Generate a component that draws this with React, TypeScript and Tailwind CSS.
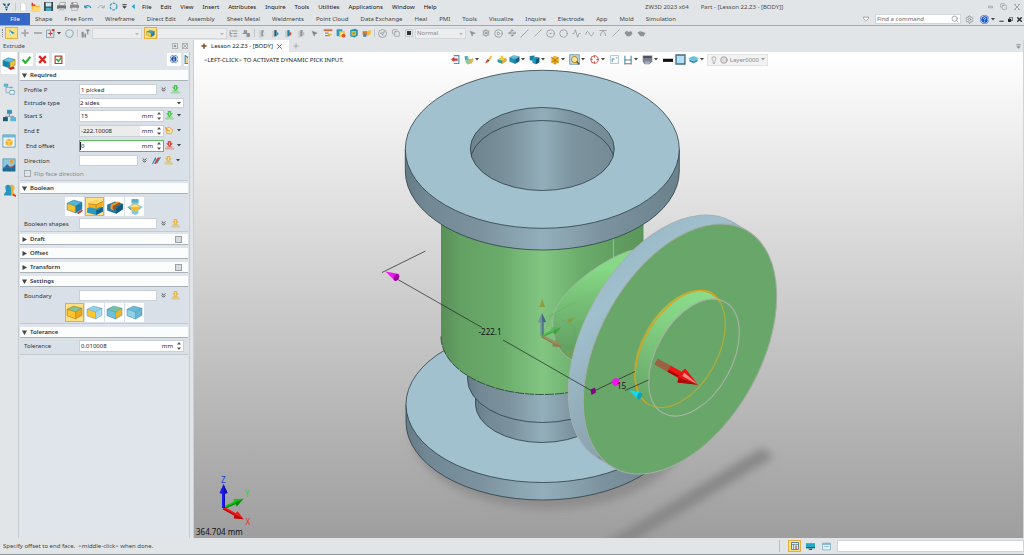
import type { ReactNode } from "react";
import {
  Activity,
  ChevronsDown,
  Circle,
  CircleDot,
  CircleHelp,
  CirclePlay,
  Copy,
  Crosshair,
  Info,
  Lightbulb,
  ListTree,
  MousePointer2,
  Navigation,
  Search,
  Settings,
  Slash,
  Waypoints,
} from "lucide-react";

const MENUS = ["File", "Edit", "View", "Insert", "Attributes", "Inquire", "Tools", "Utilities", "Applications", "Window", "Help"];

const TABS = [
  "Shape", "Free Form", "Wireframe", "Direct Edit", "Assembly", "Sheet Metal", "Weldments", "Point Cloud",
  "Data Exchange", "Heal", "PMI", "Tools", "Visualize", "Inquire", "Electrode", "App", "Mold", "Simulation",
];

/* ---------- small drawings ---------- */

function Svg({ size = 11, children }: { size?: number; children: ReactNode }) {
  return (
    <svg width={size} height={size} viewBox="0 0 16 16" fill="none" className="shrink-0" aria-hidden="true">
      {children}
    </svg>
  );
}

interface CubeProps {
  top?: string;
  left?: string;
  right?: string;
  size?: number;
  edge?: string;
  children?: ReactNode;
}

function Cube({ top = "#5cc3e0", left = "#1f8fb8", right = "#0f5f86", size = 11, edge = "#2a6f8a", children }: CubeProps) {
  return (
    <Svg size={size}>
      <path d="M1 5 7 2l8 2-6 3.500z" fill={top} />
      <path d="M1 5l8 2.500V14l-8-3z" fill={left} />
      <path d="M9 7.500 15 4v6.500L9 14z" fill={right} />
      <path d="M1 5 7 2l8 2v6.500L9 14l-8-3zM1 5l8 2.500L15 4M9 7.500V14" stroke={edge} strokeWidth=".5" />
      {children}
    </Svg>
  );
}

function Caret({ className = "text-[#444]" }: { className?: string }) {
  return (
    <svg width="4" height="3" viewBox="0 0 4 3" className={`shrink-0 ${className}`} aria-hidden="true">
      <path d="M0 0h4L2 2.500z" fill="currentColor" />
    </svg>
  );
}

function PickArrow({ color, base }: { color: string; base: string }) {
  return (
    <Svg size={9}>
      <path d="M0 12h16v3H0zM3 9h10v4H3z" fill={base} />
      <path d="M5 0h6v4h3l-6 7-6-7h3z" fill={color} />
      <path d="M8 2v6" stroke="#fff" strokeWidth="1.500" opacity=".6" />
    </Svg>
  );
}

function ToolButton({ label, active, children }: { label: string; active?: boolean; children: ReactNode }) {
  return (
    <button
      type="button"
      aria-label={label}
      className={
        active
          ? "flex h-3 w-[13px] shrink-0 items-center justify-center border border-[#e0b040] bg-[#fde080]"
          : "flex h-3 w-[13px] shrink-0 items-center justify-center"
      }
    >
      {children}
    </button>
  );
}

/* ---------- title bar ---------- */

function TitleBar() {
  return (
    <header className="flex h-[13px] items-center pl-0.5 pr-1">
      <Svg size={9}>
        <path d="M1 2l5 1 1 3-3 1zM15 2l-5 1-1 3 3 1z" fill="#235a72" />
        <path d="M5 8h6l-1 3H6z" fill="#1690b4" />
        <path d="M6 12h4l-2 4z" fill="#1c4459" />
      </Svg>
      <span className="ml-1 h-2 w-px bg-[#c6cacd]" />
      <div className="flex items-center">
        <ToolButton label="New">
          <Svg size={8}><path d="M3 0h7l4 4v12H3z" fill="#fff" stroke="#bbb" /></Svg>
        </ToolButton>
        <ToolButton label="Open">
          <Svg size={10}>
            <path d="M1 4h5l1 2h7v9H1z" fill="#f3b93c" />
            <path d="M4 8h12l-2 7H1z" fill="#ffda72" />
            <path d="M2 1v4h5" stroke="#d22" strokeWidth="2" />
          </Svg>
        </ToolButton>
        <ToolButton label="Save">
          <Svg size={9}>
            <path d="M0 0h16v16H0z" fill="#37474f" />
            <path d="M3 1h10v7H3z" fill="#cfe9ef" />
            <path d="M3 10h10v6H3z" fill="#47a6b8" />
          </Svg>
        </ToolButton>
        <ToolButton label="Print">
          <Svg size={9}>
            <path d="M6 1h9l-2 5H3z" fill="#eee" stroke="#777" />
            <path d="M0 6h16v6H0z" fill="#6d7274" />
            <path d="M3 11h10v4H3z" fill="#bfc3c5" />
          </Svg>
        </ToolButton>
        <ToolButton label="Plot">
          <Svg size={9}>
            <path d="M4 1h9v4H4z" fill="#fff" stroke="#777" />
            <path d="M0 5h16v6H0z" fill="#85898b" />
            <path d="M3 10h10v5H3z" fill="#e5e5e5" stroke="#999" />
            <path d="M2 1h4v3H2z" fill="#d66" />
          </Svg>
        </ToolButton>
        <ToolButton label="Undo">
          <Svg size={8}><path d="M2 10c1-6 9-7 12 0M2 10l-1-5M2 10l5-1" stroke="#2a93ba" strokeWidth="2.500" /></Svg>
        </ToolButton>
        <ToolButton label="Redo">
          <Svg size={8}><path d="M14 10c-1-6-9-7-12 0M14 10l1-5M14 10l-5-1" stroke="#a7acaf" strokeWidth="2" /></Svg>
        </ToolButton>
        <ToolButton label="Regenerate">
          <Svg size={9}><circle cx="8" cy="8" r="6" stroke="#4aa5c7" strokeWidth="2.500" strokeDasharray="5 1.500" /></Svg>
        </ToolButton>
        <span className="ml-0.5 flex items-center gap-1">
          <Svg size={5}><path d="M1 1h14v3H1zM1 7h14l-7 8z" fill="#333" /></Svg>
          <Svg size={5}><path d="M12 0v16L2 8z" fill="#1fa3d6" /></Svg>
        </span>
      </div>
      <nav className="ml-1.5 flex items-center gap-[9px] text-[#111]">
        {MENUS.map((m) => (
          <button key={m} type="button">{m}</button>
        ))}
      </nav>
      <div className="ml-auto flex w-[375px] items-center text-[#4c4c4c]">
        <span>ZW3D 2023 x64</span>
        <span className="ml-3">Part - [Lesson 22.Z3 - [BODY]]</span>
        <div className="ml-auto flex items-center gap-[7px] text-[#8a8f92]">
          <button type="button" aria-label="Minimize">
            <Svg size={5}><path d="M1 7h14v5H1z" stroke="currentColor" strokeWidth="2" /></Svg>
          </button>
          <button type="button" aria-label="Restore"><Copy size={7} /></button>
          <button type="button" aria-label="Close">
            <Svg size={6}><path d="M1 1l14 14M15 1L1 15M1 1h4M11 1h4M1 15h4M11 15h4" stroke="currentColor" strokeWidth="2" /></Svg>
          </button>
        </div>
      </div>
    </header>
  );
}

function RibbonTabs() {
  return (
    <div className="flex h-[13px] items-center border-b border-[#a4a9ad]">
      <button type="button" className="h-3 w-[30px] bg-[#3567c4] text-white">File</button>
      <nav className="ml-[5px] flex items-center gap-3 text-[#444]">
        {TABS.map((t) => (
          <button key={t} type="button">{t}</button>
        ))}
      </nav>
      <div className="ml-auto flex items-center pr-0.5">
        <Svg size={6}><path d="M1 3h14v3L8 13 1 6z" fill="#fff" stroke="#888" strokeWidth="2" /></Svg>
        <label className="ml-1.5 flex h-[10px] w-[86px] items-center border border-[#d3d6d9] bg-white px-px">
          <input aria-label="Find a command" placeholder="Find a command" className="w-full min-w-0 outline-none placeholder:text-[#666]" />
          <Search size={8} className="shrink-0 text-[#888]" />
        </label>
        <button type="button" aria-label="Options" className="ml-1"><Settings size={9} className="text-[#888]" /></button>
        <button type="button" aria-label="Help" className="ml-1.5"><CircleHelp size={9} className="rounded-full bg-[#1d55c4] text-white" /></button>
        <span className="ml-0.5"><Caret /></span>
        <div className="ml-1 flex items-center gap-1 text-[#222]">
          <Svg size={5}><path d="M1 12h14v3H1z" fill="currentColor" /></Svg>
          <Svg size={5}><path d="M5 1h10v10H5z" stroke="currentColor" strokeWidth="2" /><path d="M0 6h10v10H0z" fill="currentColor" /></Svg>
          <Svg size={5}><path d="M1 1l14 14M15 1L1 15" stroke="currentColor" strokeWidth="4" /></Svg>
        </div>
      </div>
    </div>
  );
}

function Separator() {
  return <span className="mx-px h-2 w-px bg-[#c3c8cc]" />;
}

function MiniSelect({ label, value, className }: { label: string; value: string; className: string }) {
  return (
    <div className={`relative flex h-[11px] shrink-0 items-center border border-[#d5d8da] bg-[#ebedee] ${className}`}>
      <select aria-label={label} className="w-full appearance-none px-px text-[#888] outline-none">
        <option>{value}</option>
      </select>
      <span className="pointer-events-none absolute right-0.5 top-1"><Caret className="text-[#bbb]" /></span>
    </div>
  );
}

function DocIcon({ fill, accent }: { fill: string; accent: string }) {
  return (
    <Svg size={9}>
      <path d="M2 3h5v12H2z" fill="#c9ced1" />
      <path d="M6 2h4v11H6z" fill={fill} />
      <path d="M9 6h4v5H9z" fill={accent} />
    </Svg>
  );
}

const SKETCH_TOOLS = [
  { label: "Select mode", icon: <MousePointer2 size={7} fill="currentColor" /> },
  { label: "Mechanism", icon: <Settings size={8} strokeWidth={3} /> },
  { label: "Play", icon: <CirclePlay size={9} /> },
  { label: "Points", icon: <Waypoints size={8} strokeWidth={2.5} /> },
  { label: "Line", icon: <Slash size={9} /> },
  { label: "Segment", icon: <Slash size={8} /> },
  { label: "Circle center", icon: <CircleDot size={9} /> },
  { label: "Circle", icon: <Circle size={9} /> },
  { label: "Polyline", icon: <Activity size={9} /> },
  { label: "Curve", icon: <Svg size={9}><path d="M1 10c3-9 5-5 7-1s5 5 7-3" stroke="currentColor" strokeWidth="1.500" /></Svg> },
  { label: "Arc", icon: <Svg size={8}><path d="M1 3h14M3 14c0-12 10-12 10 0" stroke="currentColor" strokeWidth="1.500" /></Svg> },
  { label: "Trim", icon: <Slash size={8} /> },
  { label: "Show part", icon: <Svg size={9}><path d="M1 7l3-4 4 2 5-1 2 4-4 5H5z" fill="currentColor" /></Svg> },
  { label: "Hide part", icon: <Svg size={9}><path d="M1 6l4-2 5 1 5 2-3 6H6z" fill="currentColor" /></Svg> },
];

function QuickToolbar() {
  return (
    <div className="flex h-[14px] items-center pl-0.5 text-[#8f9396]">
      <span className="h-2 border-l border-dotted border-[#888]" />
      <span className="ml-0.5 flex">
        <ToolButton label="Pick" active>
          <Svg size={9}>
            <path d="M3 1l11 6-5 2-1 6z" fill="#1b9cc0" />
            <path d="M3 1l6 8-1 6z" fill="#e6f4f7" />
          </Svg>
        </ToolButton>
      </span>
      <ToolButton label="Add to pick"><Svg size={8}><path d="M6 1h4v5h5v4h-5v5H6v-5H1V6h5z" fill="#aaaeb1" /></Svg></ToolButton>
      <ToolButton label="Remove from pick"><Svg size={8}><path d="M0 6h16v4H0z" fill="#aaaeb1" /></Svg></ToolButton>
      <ToolButton label="Pick window">
        <Svg size={9}>
          <path d="M1 2h13v13H1z" stroke="#7f9aa8" strokeWidth="1.500" />
          <path d="M8 4v8M4 8h8" stroke="#c44" strokeWidth="2" />
          <path d="M11 0h4v4h-4z" fill="#d33" />
        </Svg>
      </ToolButton>
      <Caret />
      <span className="ml-0.5 flex">
        <ToolButton label="Lasso"><Circle size={9} strokeWidth={3} strokeDasharray="5 2" className="text-[#8db5c4]" /></ToolButton>
      </span>
      <Separator />
      <ToolButton label="Filter">
        <Svg size={9}><path d="M1 5h4v10H1zM6 8h3v7H6z" fill="currentColor" /><path d="M8 1h8l-3 4v5l-2-1V5z" fill="#8a8f92" /></Svg>
      </ToolButton>
      <MiniSelect label="Pick filter" value="" className="w-[50px]" />
      <span className="ml-0.5 flex">
        <ToolButton label="Entity" active>
          <Cube size={9} top="#39a3c4" left="#ffc936" right="#1b86aa" />
        </ToolButton>
      </span>
      <MiniSelect label="Entity filter" value="" className="w-[70px]" />
      <ToolButton label="Chain"><ListTree size={9} strokeWidth={2.5} /></ToolButton>
      <ToolButton label="Layers"><Svg size={9}><path d="M3 2h6v5h5v7H8V9H1V7h2z" fill="currentColor" /></Svg></ToolButton>
      <Separator />
      <ToolButton label="Pick last"><DocIcon fill="#90979b" accent="#dde" /></ToolButton>
      <ToolButton label="Pick next"><DocIcon fill="#3c5461" accent="#2a9ec4" /></ToolButton>
      <ToolButton label="Pick body"><DocIcon fill="#1c86ad" accent="#d04a3a" /></ToolButton>
      <ToolButton label="Pick face"><DocIcon fill="#8c9295" accent="#bbb" /></ToolButton>
      <ToolButton label="Cursor"><MousePointer2 size={7} fill="#777" /></ToolButton>
      <ToolButton label="History">
        <Svg size={10}><path d="M1 2h14v3H1z" fill="#e0683a" /><path d="M1 6h14v8H1z" fill="#eef1f2" /><path d="M3 7h6v2H3zM3 11h8v2H3z" fill="#888" /><path d="M8 9h6v3H8z" fill="#f1b52a" /></Svg>
      </ToolButton>
      <ToolButton label="Image">
        <Svg size={10}><path d="M1 2h9v11H1z" fill="#2b9cbc" /><path d="M5 5h9v9H5z" fill="#f0bb30" /><path d="M7 7h5v5H7z" fill="#fbe6ac" /><circle cx="12" cy="12" r="3" fill="#df5226" /></Svg>
      </ToolButton>
      <ToolButton label="Palette">
        <Svg size={10}><path d="M2 3l8-2 4 2v9l-5 3-7-2z" fill="#2691b3" /><path d="M4 5h7v7H4z" fill="#f1c24a" /><path d="M6 7h3v3H6z" fill="#3da557" /></Svg>
      </ToolButton>
      <ToolButton label="Capture">
        <Svg size={10}><path d="M1 5h8v6H1z" fill="#d67732" /><path d="M8 5l6-2v7l-6 3z" fill="#f6be2c" /><path d="M2 10h5v4H2z" fill="#3689a8" /></Svg>
      </ToolButton>
      <Separator />
      <ToolButton label="Locate">
        <span className="flex size-[9px] items-center justify-center rounded-full border border-[#a0a4a7]"><Navigation size={5} strokeWidth={3} /></span>
      </ToolButton>
      <ToolButton label="Copy"><Copy size={8} /></ToolButton>
      <ToolButton label="Region"><Svg size={8}><path d="M1 1h14v14H1z" stroke="#aaa" /><path d="M4 4h8v8H4z" fill="#333" /></Svg></ToolButton>
      <MiniSelect label="Display" value="Normal" className="w-[51px]" />
      {SKETCH_TOOLS.map((t) => (
        <ToolButton key={t.label} label={t.label}>{t.icon}</ToolButton>
      ))}
    </div>
  );
}

/* ---------- extrude form ---------- */

function StripIcons() {
  return (
    <nav className="flex w-[18px] shrink-0 flex-col items-center">
      <button type="button" aria-label="Extrude" className="flex h-[22px] w-4 items-center justify-center bg-white">
        <Cube size={14} left="#1784ad" right="#f6c22e"><path d="M7 14l6-2 2 2-5 2z" fill="#d22" /></Cube>
      </button>
      <button type="button" aria-label="History manager" className="flex h-[26px] items-center pt-1">
        <Svg size={12}>
          <path d="M4 1v12h4M4 6h6" stroke="#7aa4b4" />
          <path d="M1 1h6v4H1zM9 5h4v2H9z" fill="#5fb0cb" />
          <path d="M9 10h6v5H9z" stroke="#5e97ad" fill="#eef5f8" />
        </Svg>
      </button>
      <button type="button" aria-label="Assembly manager" className="flex h-[26px] items-center pt-1">
        <Svg size={13}>
          <path d="M8 5v4M3 11V9h10v2" stroke="#6a8793" />
          <path d="M5 1h6v5H5z" fill="#2c96bd" />
          <path d="M0 10h6v5H0z" fill="#1b5876" />
          <path d="M9 10h7v5H9z" fill="#59b7d7" />
        </Svg>
      </button>
      <button type="button" aria-label="View manager" className="flex h-[26px] items-center pt-1">
        <Svg size={14}>
          <path d="M1 1h14v14H1z" fill="#eaf5fa" stroke="#5d9fbb" />
          <path d="M1 1h14v3H1z" fill="#6fb9d8" />
          <path d="M4 7l4-2 4 2v5l-4 2-4-2z" fill="#f4b628" />
          <path d="M4 7l4 2 4-2M8 9v5" stroke="#fbe19a" />
        </Svg>
      </button>
      <button type="button" aria-label="Visual manager" className="flex h-[26px] items-center">
        <Svg size={14}>
          <path d="M1 1h14v14H1z" fill="#8cc8e2" stroke="#5d9fbb" />
          <circle cx="11" cy="4" r="2" fill="#f39b27" />
          <path d="M1 12l5-5 4 4 5-4v8H1z" fill="#1f6d96" />
          <path d="M2 11l12-1" stroke="#d33" />
        </Svg>
      </button>
      <button type="button" aria-label="Role manager" className="flex h-[24px] items-center">
        <Svg size={13}>
          <path d="M7 3c3-4 8-2 7 2 0 3-2 3-1 5l3 4H8z" fill="#efb22d" />
          <path d="M12 13l4 2" stroke="#d33" strokeWidth="2" />
          <path d="M9 2C5-1 2 2 3 6c1 3 1 3-1 5l-1 3h9V6z" fill="#2596bf" />
        </Svg>
      </button>
    </nav>
  );
}

function SectionHeader({ title, open, check }: { title: string; open?: boolean; check?: boolean }) {
  return (
    <div className="flex h-[11px] items-center border-b border-[#a9b0b6] bg-[#fbfcfc] pl-0.5 pr-1.5">
      <svg width="5" height="5" viewBox="0 0 5 5" aria-hidden="true">
        <path d={open ? "M0 .500h5L2.500 5z" : "M.500 0 5 2.500.500 5z"} fill="#444" />
      </svg>
      <button type="button" className="ml-[3px] font-semibold text-[#333]">{title}</button>
      {check && (
        <input type="checkbox" aria-label={title} className="ml-auto size-[7px] appearance-none border border-[#9aa0a5] bg-[#d7dce1]" />
      )}
    </div>
  );
}

function Row({ id, label, indent, children }: { id: string; label: string; indent?: boolean; children: ReactNode }) {
  return (
    <div className="flex h-[15px] items-center">
      <label htmlFor={id} className={indent ? "w-[59px] shrink-0 pl-1.5 text-[#333]" : "w-[59px] shrink-0 pl-1 text-[#333]"}>{label}</label>
      {children}
    </div>
  );
}

function PickBox({ id, value = "", narrow }: { id: string; value?: string; narrow?: boolean }) {
  return (
    <>
      <input
        id={id}
        defaultValue={value}
        className={
          narrow
            ? "h-[11px] w-[59px] border border-[#c9d0d6] bg-white px-px text-[#222] outline-none"
            : "h-[11px] w-[78px] border border-[#c9d0d6] bg-white px-px text-[#222] outline-none"
        }
      />
      <ChevronsDown size={7} strokeWidth={3} className="ml-[3px] shrink-0 text-[#333]" />
    </>
  );
}

function UnitBox({ id, value, state, wide }: { id: string; value: string; state?: "readonly" | "focus"; wide?: boolean }) {
  return (
    <div
      className={`flex h-3 items-center border bg-white ${wide ? "w-[105px]" : "w-[85px]"} ${
        state === "focus" ? "border-[#5cb85c]" : "border-[#c9d0d6]"
      }`}
    >
      {state === "focus" && <span className="h-2 w-px shrink-0 bg-[#222]" />}
      <input
        id={id}
        defaultValue={value}
        readOnly={state === "readonly"}
        className={`h-full w-full min-w-0 text-[#222] outline-none ${state === "readonly" ? "bg-[#ececec]" : ""} ${
          state === "focus" ? "" : "px-px"
        }`}
      />
      <span className="pl-0.5 pr-1 text-[#222]">mm</span>
      <svg width="4" height="8" viewBox="0 0 4 8" className="mr-0.5 shrink-0" aria-hidden="true">
        <path d="M0 2.500h4L2 0zM0 5.500h4L2 8z" fill="#555" />
      </svg>
    </div>
  );
}

const YELLOW_PICK = <PickArrow color="#e8b64a" base="#dcc98c" />;
const GREEN_PICK = <PickArrow color="#48c24a" base="#9dd79d" />;

const BOOLEAN_ICONS = [
  { label: "Base", icon: <Cube size={17} top="#4fb9da" left="#f6c22e" right="#1c7fa8"><path d="M10 14l5-3 1 1-4 3z" fill="#c33" /></Cube> },
  {
    label: "Add",
    icon: (
      <Svg size={18}>
        <path d="M1 9l6-3 8 2v4l-6 3-8-2z" fill="#2a9ac3" />
        <path d="M9 11l6-3v4l-6 3z" fill="#11618a" />
        <path d="M2 5l6-3 7 1v4L9 9.500 2 8z" fill="#f5ae1f" />
        <path d="M2 5l6-3 7 1-6 3z" fill="#ffd661" />
        <path d="M2 5l7 1v3.500M9 6l6-3" stroke="#a56c10" strokeWidth=".5" />
      </Svg>
    ),
  },
  {
    label: "Remove",
    icon: (
      <Svg size={18}>
        <path d="M1 6l7-3 7 2v5l-6 4-8-3z" fill="#1c7ba5" />
        <path d="M9 9l6-4v5l-6 4z" fill="#12587b" />
        <path d="M4 6l6-3 3 1-6 4v3l-3-1z" fill="#ef9a2c" />
        <path d="M6 7l6-3 1 1-5 3v3l-2-1z" fill="#a4501b" />
      </Svg>
    ),
  },
  {
    label: "Intersect",
    icon: (
      <Svg size={18}>
        <path d="M5 1h6v5l4 2-4 3v3l-3 1-3-1v-3L1 8l4-2z" fill="#82c9e3" />
        <path d="M5 1h6v3H5z" fill="#55aed0" />
        <path d="M1 8l4 3v-2z" fill="#3e9fc5" />
        <ellipse cx="8" cy="8.500" rx="4" ry="3" fill="#eebb33" />
        <path d="M4 8c1-3 7-3 8 0z" fill="#ffe07a" />
      </Svg>
    ),
  },
];

const BOUNDARY_ICONS = [
  { label: "Both ends", icon: <Cube size={17} top="#7fc49c" left="#ffc62c" right="#eaa91c" edge="#977414" /> },
  { label: "Start", icon: <Cube size={17} top="#8ed0e8" left="#ffc62c" right="#a5d9ee" edge="#5c99b5" /> },
  { label: "End", icon: <Cube size={17} top="#73c49c" left="#6fc0df" right="#ecb829" edge="#3b87a6" /> },
  { label: "No cap", icon: <Cube size={17} top="#68bad8" left="#8fd0e7" right="#68b8d8" edge="#3b87a6" /> },
];

function IconChoices({ items, active }: { items: { label: string; icon: ReactNode }[]; active: number }) {
  return (
    <div className="flex gap-px pl-[45px]">
      {items.map((it, i) => (
        <button
          key={it.label}
          type="button"
          aria-label={it.label}
          className={
            i === active
              ? "flex size-[19px] items-center justify-center border border-[#e2b03c] bg-[#fddf86]"
              : "flex size-[19px] items-center justify-center bg-white"
          }
        >
          {it.icon}
        </button>
      ))}
    </div>
  );
}

function ExtrudePanel() {
  return (
    <aside className="flex w-[194px] shrink-0 flex-col border-r border-[#c9ced2]">
      <div className="flex h-3 items-center px-[3px] text-[#444]">
        <h1 className="text-[6px]">Extrude</h1>
        <span className="ml-auto flex gap-1 pr-0.5 text-[#999]">
          <Svg size={6}><path d="M1 1h14v14H1z" stroke="currentColor" strokeWidth="2" /><path d="M5 5h6v6H5z" fill="currentColor" /></Svg>
          <Svg size={6}><path d="M1 1h14v14H1zM1 1l14 14M15 1L1 15" stroke="currentColor" strokeWidth="2" /></Svg>
        </span>
      </div>
      <div className="flex flex-1">
        <StripIcons />
        <div className="min-w-0 flex-1 border-x border-[#c3cad0] bg-[#dfe5ea] px-px">
          <div className="flex h-[18px] items-center gap-[3px] pb-1">
            <button type="button" aria-label="OK" className="flex h-[13px] w-[13px] items-center justify-center bg-white">
              <Svg size={9}><path d="M1 8l5 6L15 3" stroke="#35b335" strokeWidth="4" /></Svg>
            </button>
            <button type="button" aria-label="Cancel" className="flex h-[13px] w-[13px] items-center justify-center bg-white">
              <Svg size={9}><path d="M2 2l12 12M14 2L2 14" stroke="#db2626" strokeWidth="4" /></Svg>
            </button>
            <button type="button" aria-label="Apply" className="flex h-[13px] w-[13px] items-center justify-center bg-white">
              <Svg size={9}>
                <path d="M2 2h12v13H2z" stroke="#c93030" strokeWidth="2" />
                <path d="M4 7l4 4 6-8" stroke="#3cac3c" strokeWidth="3" />
              </Svg>
            </button>
            <button type="button" aria-label="Information" className="ml-auto flex h-[13px] w-[14px] items-center justify-center bg-white">
              <Info size={8} strokeWidth={3} className="rounded-full bg-[#1a4ea0] text-white" />
            </button>
            <span className="flex h-[13px] w-1 items-center overflow-hidden bg-white">
              <Svg size={9}><path d="M2 1l6 4v10H2z" fill="#f3d28a" stroke="#3b8cb2" strokeWidth="2" /></Svg>
            </span>
          </div>

          <SectionHeader title="Required" open />
          <div className="mb-0.5 border-b border-[#c3cad0] bg-[#d9e0e7] pb-px pt-px">
            <Row id="profile" label="Profile P">
              <PickBox id="profile" value="1 picked" />
              <span className="ml-1">{GREEN_PICK}</span>
            </Row>
            <div className="flex h-[11px] items-center">
              <label htmlFor="etype" className="w-[59px] shrink-0 pl-1 text-[#333]">Extrude type</label>
              <div className="relative flex h-[10px] w-[105px] items-center border border-[#c9d0d6] bg-white">
                <select id="etype" className="w-full appearance-none text-[#222] outline-none">
                  <option>2 sides</option>
                </select>
                <span className="pointer-events-none absolute right-0.5 top-[3px]"><Caret /></span>
              </div>
            </div>
            <Row id="start" label="Start S">
              <UnitBox id="start" value="15" />
              <span className="ml-px flex items-center gap-[3px]">{GREEN_PICK}<Caret /></span>
            </Row>
            <Row id="end" label="End E">
              <UnitBox id="end" value="-222.10008" state="readonly" />
              <span className="ml-px flex items-center gap-[3px]">
                <Svg size={9}>
                  <path d="M2 5l5-3 7 5-3 7-8-1z" fill="#f7e3ae" stroke="#e0a53b" strokeWidth="1.500" />
                  <path d="M1 2l3 6 5 1" stroke="#e29a28" strokeWidth="2" />
                </Svg>
                <Caret />
              </span>
            </Row>
            <Row id="offset" label="End offset" indent>
              <UnitBox id="offset" value="0" state="focus" />
              <span className="ml-px flex items-center gap-[3px]"><PickArrow color="#d8473f" base="#e4a49c" /><Caret /></span>
            </Row>
            <Row id="direction" label="Direction">
              <PickBox id="direction" narrow />
              <span className="ml-1 flex items-center gap-[3px]">
                <Svg size={9}>
                  <path d="M1 14L6 4l3 8 6-10" stroke="#2d8fb8" strokeWidth="2" />
                  <path d="M5 14l7-11" stroke="#d63a32" strokeWidth="3" />
                </Svg>
                {YELLOW_PICK}
                <Caret />
              </span>
            </Row>
            <label className="flex h-[11px] items-center gap-[3px] pl-1 text-[#858a8f]">
              <input type="checkbox" disabled className="size-[7px] appearance-none border border-[#a5abb0] bg-[#dfe4e8]" />
              Flip face direction
            </label>
          </div>

          <SectionHeader title="Boolean" open />
          <div className="mb-0.5 border-b border-[#c3cad0] bg-[#d9e0e7] pt-[3px]">
            <IconChoices items={BOOLEAN_ICONS} active={1} />
            <Row id="shapes" label="Boolean shapes">
              <PickBox id="shapes" />
              <span className="ml-1">{YELLOW_PICK}</span>
            </Row>
          </div>

          <div className="flex flex-col gap-[3px]">
            <SectionHeader title="Draft" check />
            <SectionHeader title="Offset" />
            <SectionHeader title="Transform" check />
            <SectionHeader title="Settings" open />
          </div>
          <div className="mb-[3px] border-b border-[#c3cad0] bg-[#d9e0e7] py-px">
            <Row id="boundary" label="Boundary">
              <PickBox id="boundary" />
              <span className="ml-1">{YELLOW_PICK}</span>
            </Row>
            <IconChoices items={BOUNDARY_ICONS} active={0} />
          </div>

          <SectionHeader title="Tolerance" open />
          <div className="border-b border-[#c3cad0] bg-[#d9e0e7] pb-px">
            <Row id="tol" label="Tolerance">
              <UnitBox id="tol" value="0.010008" wide />
            </Row>
          </div>
        </div>
        <div className="w-[3px]" />
      </div>
    </aside>
  );
}

/* ---------- 3D view ---------- */

function Arrow3D({ x, y, angle, length, color, dark, opacity = 1 }: {
  x: number; y: number; angle: number; length: number; color: string; dark: string; opacity?: number;
}) {
  return (
    <g transform={`translate(${x} ${y}) rotate(${angle})`} opacity={opacity}>
      <path d={`M0 -1.500H${length - 8}V1.500H0z`} fill={color} />
      <path d={`M0 .300H${length - 8}V1.500H0z`} fill={dark} />
      <path d={`M${length - 9} -4L${length} 0L${length - 9} 4Q${length - 11} 0 ${length - 9} -4z`} fill={color} />
      <path d={`M${length - 9} 4L${length} 0L${length - 9.5} 0z`} fill={dark} />
    </g>
  );
}

function Model() {
  return (
    <svg
      className="absolute inset-0 h-full w-full"
      viewBox="194 52 829 486"
      preserveAspectRatio="xMidYMid slice"
      role="img"
      aria-label="Extruded valve body"
      fontFamily="Noto Sans, sans-serif"
    >
      <defs>
        <linearGradient id="steel">
          <stop offset="0" stopColor="#657b86" />
          <stop offset=".08" stopColor="#728894" />
          <stop offset=".28" stopColor="#7c939f" />
          <stop offset=".5" stopColor="#93afbb" />
          <stop offset=".72" stopColor="#7c939f" />
          <stop offset="1" stopColor="#6b818c" />
        </linearGradient>
        <linearGradient id="body">
          <stop offset="0" stopColor="#588f58" />
          <stop offset=".1" stopColor="#64a164" />
          <stop offset=".3" stopColor="#6aab6a" />
          <stop offset=".5" stopColor="#82c682" />
          <stop offset=".7" stopColor="#6aab6a" />
          <stop offset="1" stopColor="#5a945a" />
        </linearGradient>
        <linearGradient id="bore">
          <stop offset="0" stopColor="#6c828d" />
          <stop offset=".3" stopColor="#7d95a0" />
          <stop offset=".5" stopColor="#92aeba" />
          <stop offset=".7" stopColor="#7d95a0" />
          <stop offset="1" stopColor="#748a95" />
        </linearGradient>
        <linearGradient id="rim" gradientUnits="userSpaceOnUse" x1="710" y1="215" x2="600" y2="470">
          <stop offset="0" stopColor="#96b4c1" />
          <stop offset=".25" stopColor="#a0c0cd" />
          <stop offset=".55" stopColor="#8faab6" />
          <stop offset="1" stopColor="#78909b" />
        </linearGradient>
        <linearGradient id="neck" gradientUnits="userSpaceOnUse" x1="600" y1="268" x2="605" y2="345">
          <stop offset="0" stopColor="#86d986" />
          <stop offset=".4" stopColor="#77c077" />
          <stop offset="1" stopColor="#64a264" />
        </linearGradient>
        <linearGradient id="pocket" gradientUnits="userSpaceOnUse" x1="700" y1="290" x2="650" y2="405">
          <stop offset="0" stopColor="#8bdc8b" />
          <stop offset=".35" stopColor="#83d083" />
          <stop offset="1" stopColor="#66a566" />
        </linearGradient>
        <filter id="soft" x="-20%" y="-20%" width="140%" height="140%"><feGaussianBlur stdDeviation="4" /></filter>
        <clipPath id="boreClip"><ellipse cx="542.300" cy="149" rx="72" ry="41.500" /></clipPath>
        <clipPath id="pocketClip"><ellipse cx="680" cy="349" rx="63.600" ry="37.800" transform="rotate(-60.800 680 349)" /></clipPath>
      </defs>

      {/* floor shadows */}
      <g filter="url(#soft)" fill="#878787">
        <path d="M590 552L762 448L774 457L632 542z" />
        <ellipse cx="549" cy="430" rx="138" ry="79" fill="#8d8d8d" />
      </g>

      {/* bottom flange and its hub */}
      <g stroke="#2f3f46" strokeWidth=".8">
        <path d="M406 404.500V422A136.500 78 0 0 0 679 422V404.500z" fill="url(#steel)" />
        <ellipse cx="542.500" cy="404.500" rx="136.500" ry="78" fill="#a0c1cd" />
        <path d="M475.500 395V404A66.500 38.500 0 0 0 608.500 404V395z" fill="url(#steel)" />
        <path d="M467.500 370V379A75 43.500 0 0 0 617.500 379V370z" fill="url(#steel)" />
      </g>

      {/* main barrel */}
      <path d="M441 200V336.500A101.250 58 0 0 0 643.500 336.500V200z" fill="url(#body)" />
      <path d="M441 336.500A101.250 58 0 0 0 643.500 336.500" fill="none" stroke="#2f4a2f" strokeWidth=".9" strokeDasharray="9 1" />
      <path d="M613.500 238V259" stroke="#9bb59b" />

      {/* top flange */}
      <g stroke="#2f3f46" strokeWidth=".8">
        <path d="M405.300 149.500V171A137 79 0 0 0 679.300 171V149.500z" fill="url(#steel)" />
        <ellipse cx="542.300" cy="149.300" rx="137" ry="79" fill="#a0c1cd" />
        <ellipse cx="542.300" cy="149" rx="72" ry="41.500" fill="url(#bore)" />
        <g clipPath="url(#boreClip)">
          <ellipse cx="542.300" cy="162" rx="72" ry="41.500" fill="none" />
        </g>
      </g>

      {/* side branch */}
      <path d="M640 249C618 249 557 288 553 318C551 340 560 355 574 361L640 380z" fill="url(#neck)" />
      <path d="M640 249C618 249 557 288 553 318C551 340 560 355 574 361" fill="none" stroke="#a3b8a3" strokeWidth=".9" />

      {/* work plane triad */}
      <g stroke="#5a9a5a" strokeWidth=".5" opacity=".5"><path d="M552 314L575 327V350L542 336zM542 320L576 302" fill="none" /></g>
      <Arrow3D x={542} y={336} angle={-90} length={23} color="#6d93a0" dark="#45697c" />
      <Arrow3D x={542} y={336} angle={-25} length={21} color="#45b845" dark="#389438" opacity={0.7} />
      <Arrow3D x={542} y={336} angle={29} length={23} color="#a08656" dark="#93693f" opacity={0.75} />
      <path d="M539.500 307L542.200 299L545 307zM567 320L575 317L570 323zM567 350L574 354L567 353z" fill="#8f9a3c" />

      {/* side flange */}
      <g fill="url(#rim)">
        <ellipse cx="665" cy="340" rx="136" ry="80.600" transform="rotate(-60.800 665 340)" stroke="#a4b1b6" />
        <path d="M732.600 222L747.600 231L612.400 467L597.400 458z" />
      </g>
      <path d="M732.600 222L747.600 231M597.400 458L612.400 467" stroke="#a4b1b6" />
      <ellipse cx="680" cy="349" rx="136" ry="80.600" transform="rotate(-60.800 680 349)" fill="#69a669" stroke="#a5aba5" />
      <g clipPath="url(#pocketClip)">
        <path d="M625 280H740V420H625z" fill="url(#pocket)" />
        <ellipse cx="694" cy="357.500" rx="63.600" ry="37.800" transform="rotate(-60.800 694 357.500)" fill="#69a669" />
      </g>
      <ellipse cx="680" cy="349" rx="63.600" ry="37.800" transform="rotate(-60.800 680 349)" fill="none" stroke="#b3ad35" strokeWidth="1.200" />
      <path d="M720 302C714 292 708 289.500 698 290.500C665 297 636 340 635 376C636 390 640 398 646 403" fill="none" stroke="#dda11d" strokeWidth="1.200" />
      <ellipse cx="694" cy="357.500" rx="63.600" ry="37.800" transform="rotate(-60.800 694 357.500)" fill="none" stroke="#a4b3a4" strokeWidth="1.200" />

      {/* dimensions */}
      <g stroke="#222" strokeWidth=".7">
        <path d="M382 272.500L425.500 251M397 279L482 327.500M503 340L592 391M593 391.500L635 371.500M625 390.500L648.500 380" />
      </g>
      <path d="M385.500 271.500L399 274L395 281z" fill="#f312f3" />
      <ellipse cx="396.500" cy="277.500" rx="2.500" ry="3.600" fill="#a000a0" transform="rotate(25 396.500 277.500)" />
      <path d="M590.500 389.500l4.500-2 1 5-4.500 2.500z" fill="#7b0a80" />
      <path d="M611 382l4-4 4.500 1-1 6-4 1z" fill="#f010f0" />
      <path d="M629 390L642.500 393L638 399.500z" fill="#0fdcf0" />
      <ellipse cx="639.500" cy="396" rx="2.300" ry="3.500" fill="#12a0b4" transform="rotate(25 639.500 396)" />
      <text x="478.500" y="334.500" fontSize="8" fill="#151515">-222.1</text>
      <text x="617" y="388.500" fontSize="8" fill="#151515">15</text>
      <g transform="translate(656 361.500) rotate(29)">
        <path d="M0 -3.500H16V3.500H0z" fill="#9a6242" />
        <path d="M15 -3.500H31V3.500H15z" fill="#f41212" />
        <path d="M15 1H31V3.500H15z" fill="#a40c0c" />
        <path d="M29 -8L48 0L29 8Q25 0 29 -8z" fill="#e81010" />
        <path d="M27.500 3L48 0L29 8z" fill="#a80b0b" />
        <path d="M30 -4L48 0L30 0z" fill="#ff8a8a" />
      </g>

      {/* view triad */}
      <Arrow3D x={223.500} y={508} angle={-25} length={22} color="#16c416" dark="#0d8a0d" />
      <Arrow3D x={223.500} y={508} angle={29} length={23} color="#f01818" dark="#b00c0c" />
      <Arrow3D x={223.500} y={508} angle={-90} length={24} color="#1c1cf0" dark="#1010b8" />
      <g fontSize="8">
        <text x="221" y="483" fill="#1a3ed8">Z</text>
        <text x="245" y="496.500" fill="#2fd02f">Y</text>
        <text x="245.500" y="524.500" fill="#e03030">X</text>
      </g>
    </svg>
  );
}

const VIEW_TOOLS: { label: string; icon: ReactNode; menu?: boolean }[] = [
  { label: "Exit", icon: <Svg size={9}><path d="M5 1h9v14H5" stroke="#4a94b5" strokeWidth="2" /><path d="M0 8l6-5v3h6v4H6v3z" fill="#d53b33" /></Svg> },
  { label: "Appearance", menu: true, icon: <Svg size={10}><path d="M1 2l5-1 2 5 5 1v6l-8 2-3-5z" fill="#93c89c" /><path d="M9 7l6-2v5l-5 3z" fill="#e7b54a" /><path d="M1 2l4 0 1 5-4 1z" fill="#55a8c5" /></Svg> },
  { label: "Paint", icon: <Svg size={9}><path d="M2 15l3-6 3 3z" fill="#d33" /><path d="M5 9l3 3 2-2-3-3z" fill="#6b3b25" /><path d="M7 7l5-6 3 2-5 7z" fill="#ecc45a" /></Svg> },
  { label: "Align face", icon: <Svg size={10}><path d="M1 7l6-3 8 2v4l-7 4-7-3z" fill="#2694bb" /><path d="M1 7l6-3 8 2-7 3z" fill="#f7c631" /><path d="M6 1h4v4H6z" fill="#f9c62c" /><path d="M8 9l7-3v4l-7 4z" fill="#e9b124" /></Svg> },
  { label: "Shaded", menu: true, icon: <Cube size={11} /> },
  { label: "Wireframe view", menu: true, icon: <Svg size={11}><path d="M1 3l7-1v8l-7-1z" fill="#1880a6" /><path d="M5 6l5-2 5 1v7l-5 3-5-2z" fill="#2596bd" /><path d="M10 8l5-3v7l-5 3z" fill="#0d5674" /></Svg> },
  { label: "Section", menu: true, icon: <Svg size={10}><path d="M2 4l6-3 6 3v8l-6 3-6-3z" fill="#f2b125" /><path d="M2 4l6 4 6-4M8 8v7M2 12l6-4 6 4" stroke="#9a6410" /></Svg> },
  { label: "Zoom", menu: true, icon: <Svg size={11}><path d="M1 1h14v14H1z" fill="#bcd9e5" stroke="#4689a5" /><circle cx="8" cy="8" r="4.500" fill="#fae29c" stroke="#c39022" strokeWidth="1.500" /><path d="M11 11l4 4" stroke="#6f5518" strokeWidth="2" /></Svg> },
  { label: "Target", menu: true, icon: <Crosshair size={9} strokeWidth={2.5} className="text-[#cc5048]" /> },
  { label: "Window", icon: <Svg size={9}><path d="M1 1h14v14H1z" stroke="#6f9fb4" /><path d="M4 12V7h4M12 4v2" stroke="#3b7893" strokeWidth="1.500" /></Svg> },
  { label: "Measure", menu: true, icon: <Svg size={10}><path d="M3 1v14M13 1v14" stroke="#579dba" strokeWidth="2" /><path d="M3 8h10" stroke="#333" /><path d="M3 14h10" stroke="#e04444" strokeWidth="1.500" /></Svg> },
  { label: "Background", menu: true, icon: <Svg size={11}><path d="M1 2h14v9l-4 4H4l-3-4z" fill="#7d838a" /><path d="M2 3h12v3H2z" fill="#4b525b" /><path d="M4 11h7v3H5z" fill="#a8b8d5" /></Svg> },
  { label: "Line width", icon: <Svg size={10}><path d="M0 6h16v5H0z" fill="#111" /></Svg> },
  { label: "Plane", icon: <Svg size={11}><path d="M1.500 1.500h13v13h-13z" fill="#b4dff4" stroke="#456b7c" strokeWidth="2" /></Svg> },
  { label: "Layer manager", menu: true, icon: <Svg size={11}><path d="M0 6l8-3 8 3-8 4z" fill="#68c1df" /><path d="M2 7.500l6 3 6-3v3l-6 3-6-3z" fill="#2a8db3" /></Svg> },
];

function Viewport() {
  return (
    <main className="relative flex flex-1 flex-col bg-linear-to-b from-white to-[#9e9e9e]">
      <Model />
      <div className="relative flex h-[15px] items-center pl-[10px]">
        <p className="w-[245px] shrink-0 text-[#222]">&lt;LEFT-CLICK&gt; TO ACTIVATE DYNAMIC PICK INPUT.</p>
        <div className="flex items-center">
          {VIEW_TOOLS.map((t) => (
            <span key={t.label} className={t.menu ? "flex w-5 items-center" : "flex w-[13px] items-center"}>
              <ToolButton label={t.label}>{t.icon}</ToolButton>
              {t.menu && <Caret />}
            </span>
          ))}
        </div>
        <button type="button" className="flex h-3 w-[61px] items-center gap-0.5 border border-[#e3e3e3] bg-[#f2f2f2] px-0.5 text-[#888]">
          <Lightbulb size={8} />
          <Circle size={8} fill="#ddd" />
          Layer0000
          <span className="ml-auto"><Caret className="text-[#999]" /></span>
        </button>
      </div>
      <p className="relative mt-auto pl-0.5 text-[8px] leading-3 text-[#111]">364.704 mm</p>
    </main>
  );
}

function StatusBar() {
  return (
    <footer className="flex h-[17px] items-center border-b border-[#8f9599] pl-[3px] text-[#444]">
      <span>Specify offset to end face.&nbsp; &lt;middle-click&gt; when done.</span>
      <span className="ml-auto h-3 w-px bg-[#b5babe]" />
      <div className="ml-2 flex items-center gap-[3px]">
        <ToolButton label="Panels" active>
          <Svg size={8}><path d="M1 1h14v14H1z" fill="#d8ebf2" stroke="#60889a" strokeWidth="2" /><path d="M1 5h14M5 5v9" stroke="#60889a" strokeWidth="1.500" /><path d="M10 7v7" stroke="#d7442c" strokeWidth="2.500" /></Svg>
        </ToolButton>
        <ToolButton label="Monitor">
          <Svg size={9}><path d="M0 2h16v9H0z" fill="#26a9c5" /><path d="M0 9h16v2H0zM5 12h6v2H5z" fill="#375866" /></Svg>
        </ToolButton>
        <ToolButton label="Output">
          <Svg size={9}><path d="M1 2h14v12H1z" fill="#e4f1f6" stroke="#5a9ab3" /><path d="M1 2h14v3H1z" fill="#78b5cb" /><path d="M4 8h8" stroke="#6a93a3" /></Svg>
        </ToolButton>
      </div>
      <input aria-label="Command output" readOnly className="ml-1 h-3 w-[187px] border border-[#d0d4d7] bg-white outline-none" />
    </footer>
  );
}

export default function App() {
  return (
    <div className="flex min-h-screen flex-col bg-[#e1e5e8] font-['Noto_Sans',sans-serif] text-[6px] leading-[8px]">
      <TitleBar />
      <RibbonTabs />
      <QuickToolbar />
      <div className="flex flex-1">
        <ExtrudePanel />
        <section className="flex min-w-0 flex-1 flex-col border-r border-[#d0d4d7]">
          <div className="flex h-3 items-center">
            <div className="flex h-full w-[95px] items-center justify-between bg-white px-[7px] text-[#222]">
              <Svg size={6}><path d="M6 1h4v5h5v4h-5v5H6v-5H1V6h5z" fill="#7c4a20" /></Svg>
              Lesson 22.Z3 - [BODY]
              <button type="button" aria-label="Close tab">
                <Svg size={5}><path d="M1 1l14 14M15 1L1 15" stroke="#7c4a20" strokeWidth="3" /></Svg>
              </button>
            </div>
            <button type="button" aria-label="New tab" className="ml-1">
              <Svg size={6}><path d="M8 1v14M1 8h14" stroke="#999" strokeWidth="2" /></Svg>
            </button>
            <span className="ml-auto pr-0.5">
              <Svg size={5}><path d="M1 1h14v3H1zM1 7h14l-7 8z" fill="#8b9095" /></Svg>
            </span>
          </div>
          <Viewport />
        </section>
      </div>
      <StatusBar />
    </div>
  );
}
